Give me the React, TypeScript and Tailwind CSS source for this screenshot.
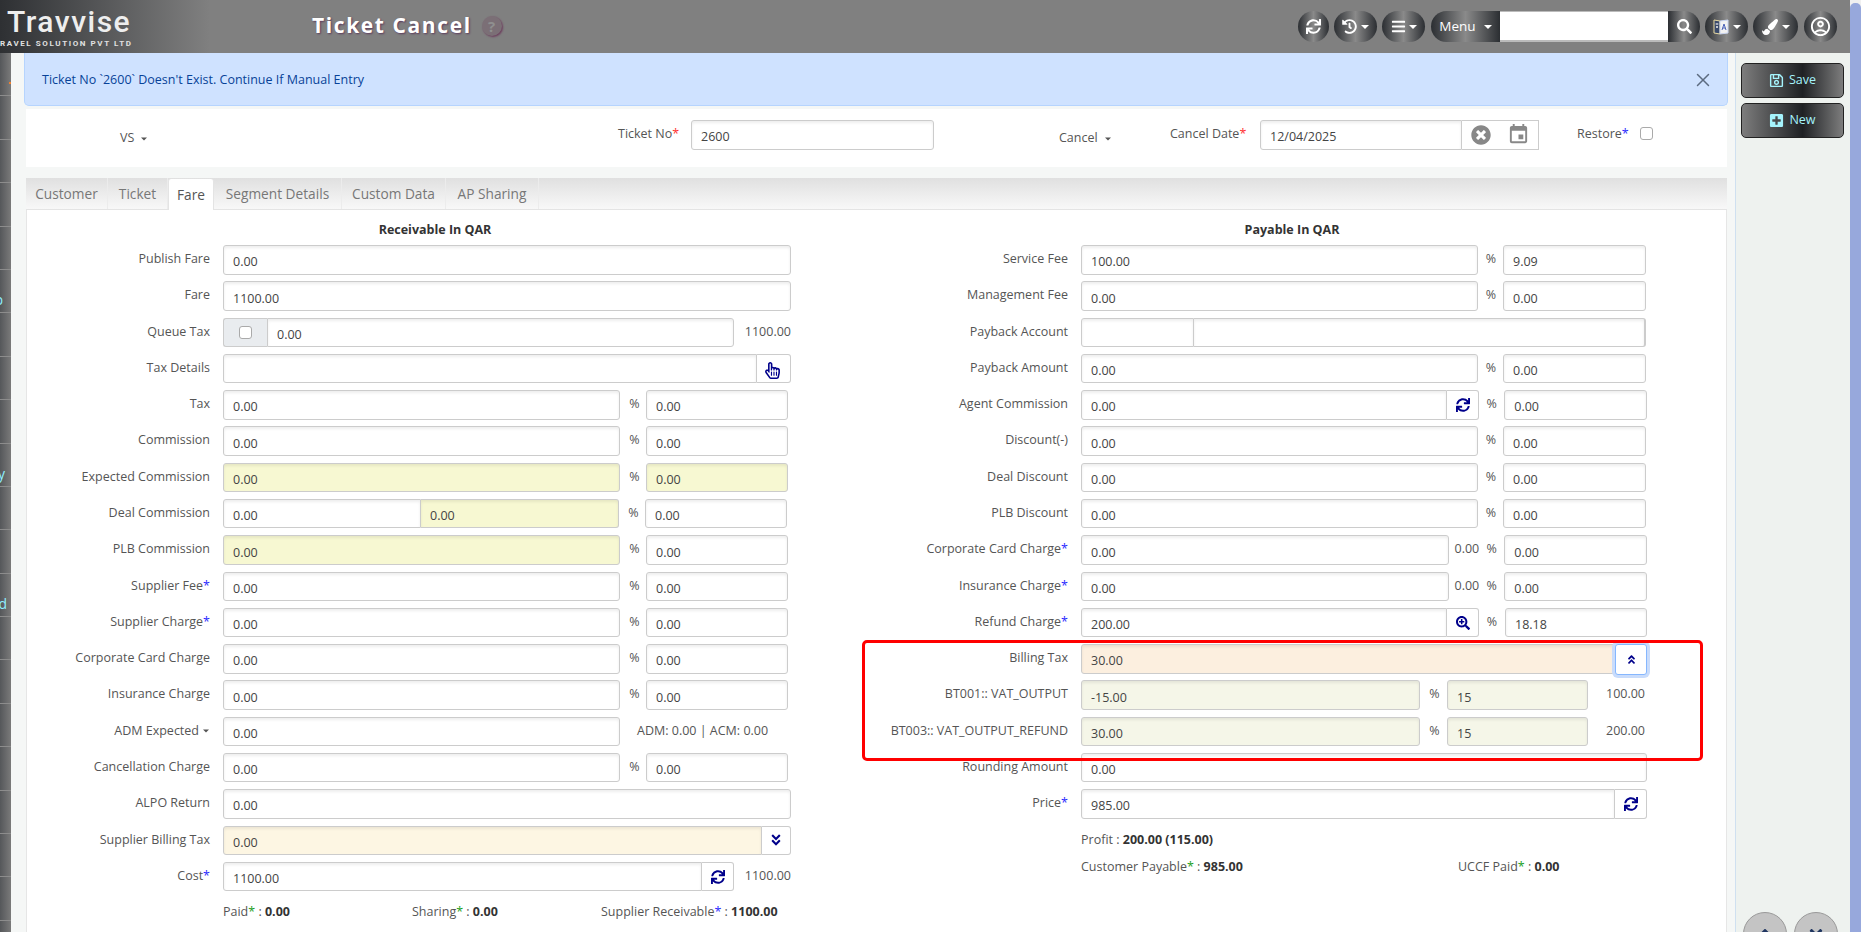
import type { ReactNode } from "react";
import { FaAngleDoubleDown, FaAngleDoubleUp, FaAngleDown, FaAngleUp, FaBars, FaHistory, FaPaintBrush, FaPlusSquare, FaRegHandPointer, FaRegSave, FaSearch, FaSearchPlus, FaSync, FaTimesCircle } from "react-icons/fa";
import { MdEvent, MdOutlineAccountCircle } from "react-icons/md";
import { X } from "lucide-react";

const pill = "bg-[linear-gradient(to_right,#2b2e32,#8a8a8a_50%,#2b2e32)] text-white flex items-center justify-center h-[31px]";
const btn = "h-[35px] border border-[#222] rounded-[5px] bg-[linear-gradient(to_right,#7d7d7d,#1f2124_60%,#7d7d7d)] text-[#a5f3fc] text-[12.5px] flex items-center justify-center gap-[5px]";

function Caret() {
  return <span className="inline-block border-t-[4px] border-x-[4px] border-x-transparent border-t-current" />;
}

function Star({ c = "text-[#2a2aff]" }: { c?: string }) {
  return <span className={c}>*</span>;
}

function Inp({ value = "", className = "", bg = "bg-white" }: { value?: string; className?: string; bg?: string }) {
  return (
    <input
      readOnly
      value={value}
      className={`h-[29.5px] min-w-0 border border-[#ccc] rounded-[3px] pl-[9px] pt-[4px] text-[12.5px] text-[#444] shadow-[inset_0_2px_3px_rgba(0,0,0,0.07)] outline-none ${bg} ${className}`}
    />
  );
}

function Addon({ children, className = "" }: { children: ReactNode; className?: string }) {
  return (
    <div className={`h-[29.5px] shrink-0 border border-l-0 border-[#ccc] rounded-r-[3px] bg-white flex items-center justify-center text-[#00008b] text-[14px] ${className}`}>
      {children}
    </div>
  );
}

function Pct({ className = "w-[26px] pl-[3px]" }: { className?: string }) {
  return <span className={`shrink-0 text-center text-[12.5px] text-[#555] pt-[5px] ${className}`}>%</span>;
}

function Row({ label, w, children }: { label: ReactNode; w: string; children: ReactNode }) {
  return (
    <div className="flex h-[36.29px]">
      <div className={`shrink-0 text-right text-[12.5px] text-[#555] pt-[5px] pr-[13px] leading-[18px] ${w}`}>{label}</div>
      <div className="flex flex-1 min-w-0">{children}</div>
    </div>
  );
}

const LW = "w-[196px]";
const RW = "w-[241px]";

function LeftPct({ label, value = "0.00", bg, pctBg }: { label: ReactNode; value?: string; bg?: string; pctBg?: string }) {
  return (
    <Row label={label} w={LW}>
      <Inp value={value} bg={bg} className="w-[397px]" />
      <Pct />
      <Inp value="0.00" bg={pctBg} className="w-[142px]" />
    </Row>
  );
}

function RightPct({ label, value = "0.00", pct = "0.00" }: { label: ReactNode; value?: string; pct?: string }) {
  return (
    <Row label={label} w={RW}>
      <Inp value={value} className="w-[397px]" />
      <Pct className="w-[25px] pl-[1px]" />
      <Inp value={pct} className="w-[143px]" />
    </Row>
  );
}

function Sidebar() {
  const items: [string, string][] = [["", ""], ["", ""], ["", ""], ["", ""], ["", ""], ["p", "pr-[8px]"], ["", ""], ["", ""], ["", ""], ["y", "pr-[6px]"], ["", ""], ["", ""], ["d", "pr-[4px]"], ["", ""], ["", ""], ["", ""], ["", ""], ["", ""], ["", ""], ["", ""]];
  return (
    <div className="w-[11px] shrink-0 overflow-hidden bg-[linear-gradient(to_right,#55575a,#7a7a7a)]">
      {items.map(([t, pr], i) => (
        <div key={i} className={`h-[43.4px] border-b border-[#8c8c8c] flex items-end justify-end pb-[2px] text-[14px] text-[#8ff0ff] ${pr}`}>
          {i === 0 && <span className="w-[2px] h-[2px] bg-[#f08030] mb-[9px]" />}
          {t}
        </div>
      ))}
    </div>
  );
}

function Header() {
  return (
    <div className="h-[53px] shrink-0 flex items-center overflow-hidden bg-[linear-gradient(to_right,#2e3033,#808080_210px)]">
      <div className="w-[312px] shrink-0 pl-[7px] pt-[2px]">
        <div className="font-['Roboto'] font-medium text-[30px] leading-[32px] tracking-[1.5px] text-[#eeeeee]">Travvise</div>
        <div className="font-['Roboto'] font-bold text-[8px] leading-[11px] tracking-[1.6px] text-[#e0e0e0] whitespace-nowrap -ml-[7px]">RAVEL SOLUTION PVT LTD</div>
      </div>
      <div className="text-[21px] font-bold tracking-[1.6px] text-white -mt-[2px] [text-shadow:1px_1px_2px_#5b3a5b]">Ticket Cancel</div>
      <div className="ml-[10px] -mt-[1px] w-[20px] h-[20px] rounded-full bg-[#7b6f76] text-[#8f8f8f] text-[15px] font-bold flex items-center justify-center shadow-[1px_1px_2px_#6b3a5b]">?</div>
      <div className="ml-auto flex items-center mr-[13px]">
        <div className={`${pill} w-[31px] rounded-full text-[15px]`}><FaSync /></div>
        <div className={`${pill} w-[43px] rounded-full ml-[5px] gap-[4px] text-[15px]`}><FaHistory /><Caret /></div>
        <div className={`${pill} w-[43px] rounded-full ml-[5px] gap-[3px] text-[15px]`}><FaBars /><Caret /></div>
        <div className={`${pill} w-[69px] rounded-l-full ml-[6px] gap-[8px] text-[13.5px]`}>Menu<Caret /></div>
        <input readOnly className="w-[168px] h-[31px] bg-white border-b-2 border-t border-[#bbb] outline-none" />
        <div className={`${pill} w-[32px] rounded-r-full text-[15px]`}><FaSearch /></div>
        <div className={`${pill} w-[43px] rounded-full ml-[5px] gap-[4px]`}>
          <svg width="16" height="18" viewBox="0 0 16 18">
            <path d="M1 2l6 1v13l-6-1z" fill="#3a4a6a" stroke="#e8d9a0" strokeWidth="1" />
            <path d="M7 3l8-1v13l-8 1z" fill="#f2f2f2" stroke="#c8d4f0" strokeWidth="1" />
            <path d="M9 12l2-6 2 6M9.8 10h2.4" fill="none" stroke="#4a62b8" strokeWidth="1" />
            <path d="M2.5 6h3M4 5v2M3 10l2-2M3 8l2 2" fill="none" stroke="#e8e8e8" strokeWidth="0.8" />
          </svg>
          <Caret />
        </div>
        <div className={`${pill} w-[45px] rounded-full ml-[5px] gap-[4px] text-[16px]`}><FaPaintBrush /><Caret /></div>
        <div className={`${pill} w-[33px] rounded-full ml-[6px] text-[23px]`}><MdOutlineAccountCircle /></div>
      </div>
    </div>
  );
}

function TopCard() {
  return (
    <div className="ml-[15px] mr-[8px] mt-[3px] h-[58px] bg-white flex text-[12.5px] text-[#555] pt-[11px]">
      <div className="w-[592px] pl-[94px] pt-[9px] flex items-center gap-[6px] h-[28px]">VS <span className="inline-flex scale-75"><Caret /></span></div>
      <div className="w-[73px] pt-[5px] whitespace-nowrap">Ticket No<Star c="text-[#ff3030]" /></div>
      <Inp value="2600" className="w-[243px]" />
      <div className="w-[126px] pl-[125px] pt-[9px] flex items-center gap-[6px] h-[28px] whitespace-nowrap">Cancel <span className="inline-flex scale-75"><Caret /></span></div>
      <div className="ml-[110px] w-[90px] pt-[5px] whitespace-nowrap">Cancel Date<Star c="text-[#ff3030]" /></div>
      <Inp value="12/04/2025" className="w-[202px] rounded-r-none" />
      <div className="w-[77px] h-[29.5px] border border-l-0 border-[#ccc] flex items-center justify-between pl-[9px] pr-[8px] text-[#888]">
        <FaTimesCircle className="text-[20px]" />
        <MdEvent className="text-[23px]" />
      </div>
      <div className="ml-[38px] w-[63px] pt-[5px] whitespace-nowrap">Restore<Star /></div>
      <span className="mt-[7px] w-[13px] h-[13px] border border-[#aaa] rounded-[3px] bg-white" />
    </div>
  );
}

function Tabs() {
  const tabs = [["Customer", "w-[82px]"], ["Ticket", "w-[60px]"], ["Fare", "w-[46px]"], ["Segment Details", "w-[128px]"], ["Custom Data", "w-[104px]"], ["AP Sharing", "w-[93px]"]];
  return (
    <div className="ml-[15px] mr-[8px] mt-[11px] h-[32px] shrink-0 flex bg-[linear-gradient(to_bottom,#e0e0e0,#f8f8f8)] border-b border-[#e4e4e4] text-[13.7px] text-[#777]">
      {tabs.map(([t, w]) => (
        <div
          key={t}
          className={`${w} flex items-center justify-center pt-[1px] ${t === "Fare" ? "bg-white text-[#555] rounded-t-[3px] mt-[1px] h-[32px] border-x border-[#e4e4e4]" : "border-r border-[#ececec]"}`}
        >
          {t}
        </div>
      ))}
    </div>
  );
}

function LeftCol() {
  return (
    <div className="w-[764px] shrink-0">
      <div className="h-[35px] pt-[10px] pl-[52px] text-center text-[12.5px] leading-[19px] font-bold text-[#333]">Receivable In QAR</div>
      <Row label="Publish Fare" w={LW}><Inp value="0.00" className="w-full" /></Row>
      <Row label="Fare" w={LW}><Inp value="1100.00" className="w-full" /></Row>
      <Row label="Queue Tax" w={LW}>
        <div className="w-[44px] h-[29.5px] shrink-0 border border-[#ccc] border-r-0 rounded-l-[3px] bg-[#e9ecef] flex items-center justify-center">
          <span className="w-[13px] h-[13px] border border-[#aaa] rounded-[3px] bg-white" />
        </div>
        <Inp value="0.00" className="w-[467px] rounded-l-none" />
        <span className="ml-auto text-[12.5px] text-[#555] pt-[5px]">1100.00</span>
      </Row>
      <Row label="Tax Details" w={LW}>
        <Inp className="flex-1 rounded-r-none" />
        <Addon className="w-[34px] text-[17px] pr-[2px] pt-[3px]"><FaRegHandPointer /></Addon>
      </Row>
      <LeftPct label="Tax" />
      <LeftPct label="Commission" />
      <LeftPct label="Expected Commission" bg="bg-[#f7f8d2]" pctBg="bg-[#f7f8d2]" />
      <Row label="Deal Commission" w={LW}>
        <Inp value="0.00" className="w-[198px] rounded-r-none" />
        <Inp value="0.00" bg="bg-[#f7f8d2]" className="w-[198px] rounded-l-none border-l-0" />
        <Pct />
        <Inp value="0.00" className="w-[142px]" />
      </Row>
      <LeftPct label="PLB Commission" bg="bg-[#f7f8d2]" />
      <LeftPct label={<>Supplier Fee<Star /></>} />
      <LeftPct label={<>Supplier Charge<Star /></>} />
      <LeftPct label="Corporate Card Charge" />
      <LeftPct label="Insurance Charge" />
      <Row label={<span className="inline-flex items-center gap-[3px]">ADM Expected<span className="scale-75 inline-flex"><Caret /></span></span>} w={LW}>
        <Inp value="0.00" className="w-[397px]" />
        <span className="ml-[17px] text-[12.5px] text-[#555] pt-[5px] whitespace-nowrap">ADM: 0.00 | ACM: 0.00</span>
      </Row>
      <LeftPct label="Cancellation Charge" />
      <Row label="ALPO Return" w={LW}><Inp value="0.00" className="w-full" /></Row>
      <Row label="Supplier Billing Tax" w={LW}>
        <Inp value="0.00" bg="bg-[#fdf6e3]" className="flex-1 rounded-r-none" />
        <Addon className="w-[29px] text-[11px]"><FaAngleDoubleDown /></Addon>
      </Row>
      <Row label={<>Cost<Star /></>} w={LW}>
        <Inp value="1100.00" className="w-[479px] rounded-r-none" />
        <Addon className="w-[32px]"><FaSync /></Addon>
        <span className="ml-auto text-[12.5px] text-[#555] pt-[5px]">1100.00</span>
      </Row>
      <div className="flex pl-[196px] pt-[5px] text-[12.5px] text-[#555] leading-[18px]">
        <span className="w-[189px]">Paid<Star c="text-[#22a022]" /> : <b className="text-[#333]">0.00</b></span>
        <span className="w-[189px]">Sharing<Star c="text-[#22a022]" /> : <b className="text-[#333]">0.00</b></span>
        <span className="whitespace-nowrap">Supplier Receivable<Star /> : <b className="text-[#333]">1100.00</b></span>
      </div>
    </div>
  );
}

function RightCol() {
  return (
    <div className="w-[807px] shrink-0">
      <div className="h-[35px] pt-[10px] pl-[97px] text-center text-[12.5px] leading-[19px] font-bold text-[#333]">Payable In QAR</div>
      <RightPct label="Service Fee" value="100.00" pct="9.09" />
      <RightPct label="Management Fee" />
      <Row label="Payback Account" w={RW}>
        <Inp className="w-[113px] rounded-r-none" />
        <Inp className="w-[452px] rounded-l-none border-l-0 border-r-2" />
      </Row>
      <RightPct label="Payback Amount" />
      <Row label="Agent Commission" w={RW}>
        <Inp value="0.00" className="w-[367px] rounded-r-none" />
        <Addon className="w-[32px]"><FaSync /></Addon>
        <Pct className="w-[25px]" />
        <Inp value="0.00" className="w-[143px]" />
      </Row>
      <RightPct label="Discount(-)" />
      <RightPct label="Deal Discount" />
      <RightPct label="PLB Discount" />
      <Row label={<>Corporate Card Charge<Star /></>} w={RW}>
        <Inp value="0.00" className="w-[369px]" />
        <span className="w-[30px] shrink-0 text-right text-[12.5px] text-[#555] pt-[5px]">0.00</span>
        <Pct className="w-[25px]" />
        <Inp value="0.00" className="w-[143px]" />
      </Row>
      <Row label={<>Insurance Charge<Star /></>} w={RW}>
        <Inp value="0.00" className="w-[369px]" />
        <span className="w-[30px] shrink-0 text-right text-[12.5px] text-[#555] pt-[5px]">0.00</span>
        <Pct className="w-[25px]" />
        <Inp value="0.00" className="w-[143px]" />
      </Row>
      <Row label={<>Refund Charge<Star /></>} w={RW}>
        <Inp value="200.00" className="w-[366px] rounded-r-none" />
        <Addon className="w-[32px]"><FaSearchPlus /></Addon>
        <Pct className="w-[26px]" />
        <Inp value="18.18" className="w-[142px]" />
      </Row>
      <Row label="Billing Tax" w={RW}>
        <Inp value="30.00" bg="bg-[#fcefdf]" className="w-[534px] rounded-r-none" />
        <div className="w-[32px] h-[31px] shrink-0 border border-[#86b7fe] rounded-[3px] bg-white flex items-center justify-center text-[#00008b] text-[11px] shadow-[0_0_0_3px_#c9dcfb]"><FaAngleDoubleUp /></div>
      </Row>
      <Row label="BT001:: VAT_OUTPUT" w={RW}>
        <Inp value="-15.00" bg="bg-[#f5f6e8]" className="w-[339px]" />
        <Pct className="w-[27px] pl-[2px]" />
        <Inp value="15" bg="bg-[#f5f6e8]" className="w-[141px]" />
        <span className="ml-[18px] text-[12.5px] text-[#555] pt-[5px]">100.00</span>
      </Row>
      <Row label="BT003:: VAT_OUTPUT_REFUND" w={RW}>
        <Inp value="30.00" bg="bg-[#f5f6e8]" className="w-[339px]" />
        <Pct className="w-[27px] pl-[2px]" />
        <Inp value="15" bg="bg-[#f5f6e8]" className="w-[141px]" />
        <span className="ml-[18px] text-[12.5px] text-[#555] pt-[5px]">200.00</span>
      </Row>
      <Row label="Rounding Amount" w={RW}><Inp value="0.00" className="w-[566px]" /></Row>
      <Row label={<>Price<Star /></>} w={RW}>
        <Inp value="985.00" className="w-[534px] rounded-r-none" />
        <Addon className="w-[32px]"><FaSync /></Addon>
      </Row>
      <div className="pl-[241px] pt-[5px] text-[12.5px] text-[#555] leading-[18px]">
        <div>Profit : <b className="text-[#333]">200.00 (115.00)</b></div>
        <div className="flex mt-[9px]">
          <span className="w-[377px]">Customer Payable<Star c="text-[#22a022]" /> : <b className="text-[#333]">985.00</b></span>
          <span>UCCF Paid<Star c="text-[#22a022]" /> : <b className="text-[#333]">0.00</b></span>
        </div>
      </div>
    </div>
  );
}

export default function App() {
  return (
    <div className="relative h-[932px] overflow-hidden flex font-['Open_Sans',sans-serif] bg-[#f5f7f6]">
      <div className="flex-1 min-w-0 flex flex-col">
        <Header />
        <div className="flex-1 min-h-0 flex">
          <Sidebar />
          <div className="flex-1 min-w-0 flex flex-col">
            {/* alert */}
            <div className="ml-[13px] mr-[7px] h-[53px] shrink-0 bg-[#cfe2ff] border-b border-x border-[#b6d4fe] rounded-b-[5px] flex items-center justify-between pl-[17px] pr-[13px] pt-[2px] text-[12.5px] text-[#084298]">
              <span>Ticket No `2600` Doesn't Exist. Continue If Manual Entry</span>
              <X size={22} strokeWidth={1.6} className="text-[#5c6b80]" />
            </div>
            <TopCard />
            <Tabs />
            <div className="ml-[15px] mr-[8px] flex-1 min-h-0 bg-white border-x border-[#e6e6e6] flex">
              <LeftCol />
              <div className="w-[49px] shrink-0" />
              <RightCol />
            </div>
          </div>
          {/* save / new */}
          <div className="w-[115px] shrink-0 bg-[#eef2ef] border-l border-[#cfe0f0] flex flex-col overflow-hidden pl-[5px] pr-[6px] pt-[10px]">
            <div className={btn}><FaRegSave className="text-[15px]" />Save</div>
            <div className={`${btn} mt-[5px]`}><FaPlusSquare className="text-[15px]" />New</div>
            <div className="mt-auto -mb-[24px] flex gap-[7px] pl-[2px]">
              <div className="w-[44px] h-[44px] shrink-0 rounded-full bg-[#c4c4c4] border border-[#999] flex justify-center pt-[10px] text-[20px] text-[#1f3560]"><FaAngleUp /></div>
              <div className="w-[44px] h-[44px] shrink-0 rounded-full bg-[#c4c4c4] border border-[#999] flex justify-center pt-[10px] text-[20px] text-[#1f3560]"><FaAngleDown /></div>
            </div>
          </div>
        </div>
      </div>
      {/* scrollbar */}
      <div className="w-[11px] shrink-0 bg-[#f0f0f0] pt-[3px]">
        <div className="h-full bg-[#97a8dc] rounded-t-[5px]" />
      </div>
      {/* red highlight */}
      <div className="absolute left-[862px] top-[640px] w-[841px] h-[121px] border-[3px] border-[#ff0000] rounded-[5px] pointer-events-none" />
    </div>
  );
}
